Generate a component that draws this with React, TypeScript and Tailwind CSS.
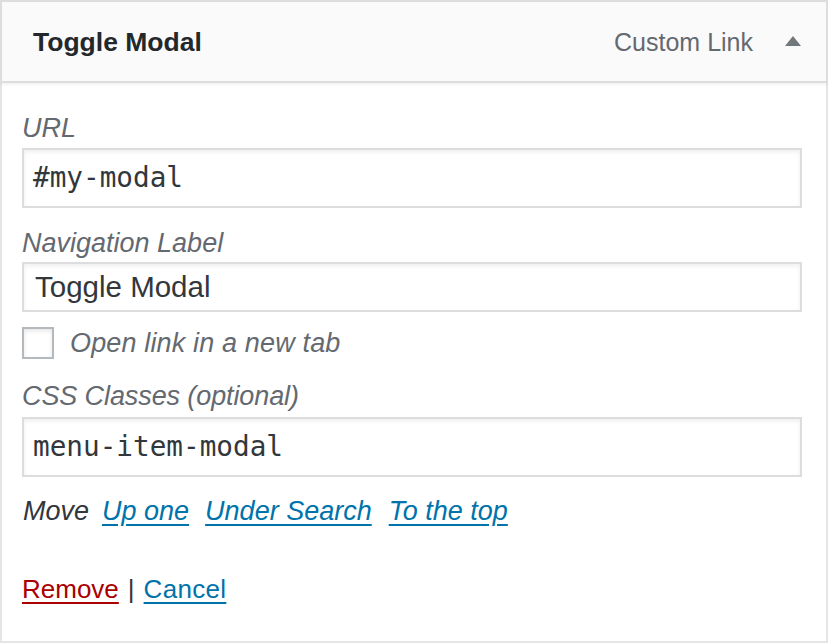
import React from "react";

export default function App() {
  const sans = "font-['Liberation_Sans',Arial,sans-serif]";
  return (
    <div className={`w-[828px] h-[643px] bg-white ${sans}`}>
      <div className="h-[83px] border-2 border-[#dddddd] bg-[#fafafa] flex items-center pl-[31px] pr-[25px] shadow-[0_2px_3px_rgba(0,0,0,0.05)] relative">
        <div className="text-[26.5px] font-bold text-[#23282d] leading-[36px] mt-[1px]">Toggle Modal</div>
        <div className="ml-auto flex items-center">
          <span className="text-[25px] text-[#646970] leading-[36px]">Custom Link</span>
          <svg width="16" height="10" viewBox="0 0 16 10" className="ml-[32px] mb-[1px]">
            <polygon points="8,0 16,10 0,10" fill="#72777c" />
          </svg>
        </div>
      </div>
      <div className="h-[560px] border-x-2 border-b-2 border-[#e5e5e5] pl-[20px] pr-[24px] pt-[27px]">
        <div className="text-[27px] italic text-[#646970] leading-[36px]">URL</div>
        <div className="mt-[2px] h-[60px] border-2 border-[#dddddd] shadow-[inset_0_2px_4px_rgba(0,0,0,0.07)] flex items-center px-[9px] font-['DejaVu_Sans_Mono',monospace] text-[27.7px] text-[#32373c]">
          #my-modal
        </div>
        <div className="mt-[17px] text-[27px] italic text-[#646970] leading-[36px]">Navigation Label</div>
        <div className="mt-[1px] h-[50px] border-2 border-[#dddddd] shadow-[inset_0_2px_4px_rgba(0,0,0,0.07)] flex items-center px-[11px] text-[29.5px] text-[#32373c]">
          Toggle Modal
        </div>
        <div className="mt-[13px] flex items-center">
          <div className="w-[32px] h-[32px] border-2 border-[#b4b9be] bg-white shadow-[inset_0_2px_4px_rgba(0,0,0,0.1)]" />
          <span className="ml-[16px] text-[27px] italic text-[#646970] leading-[36px] tracking-[0.15px]">Open link in a new tab</span>
        </div>
        <div className="mt-[17px] text-[27px] italic text-[#646970] leading-[36px] tracking-[-0.1px]">CSS Classes (optional)</div>
        <div className="mt-[3px] h-[60px] border-2 border-[#dddddd] shadow-[inset_0_2px_4px_rgba(0,0,0,0.07)] flex items-center px-[9px] font-['DejaVu_Sans_Mono',monospace] text-[27.7px] text-[#32373c]">
          menu-item-modal
        </div>
        <div className="mt-[16px] flex items-center text-[27px] italic leading-[36px]">
          <span className="text-[#32373c] ml-[1px]">Move</span>
          <a className="ml-[13px] text-[#0073aa] underline underline-offset-[4px]">Up one</a>
          <a className="ml-[16px] text-[#0073aa] underline underline-offset-[4px]">Under Search</a>
          <a className="ml-[17px] text-[#0073aa] underline underline-offset-[4px]">To the top</a>
        </div>
        <div className="mt-[42px] flex items-center text-[26px] leading-[36px]">
          <a className="text-[#a00] underline underline-offset-[4px]">Remove</a>
          <span className="mx-[9px] text-[#32373c]">|</span>
          <a className="text-[#0073aa] underline underline-offset-[4px] tracking-[0.3px]">Cancel</a>
        </div>
      </div>
    </div>
  );
}
